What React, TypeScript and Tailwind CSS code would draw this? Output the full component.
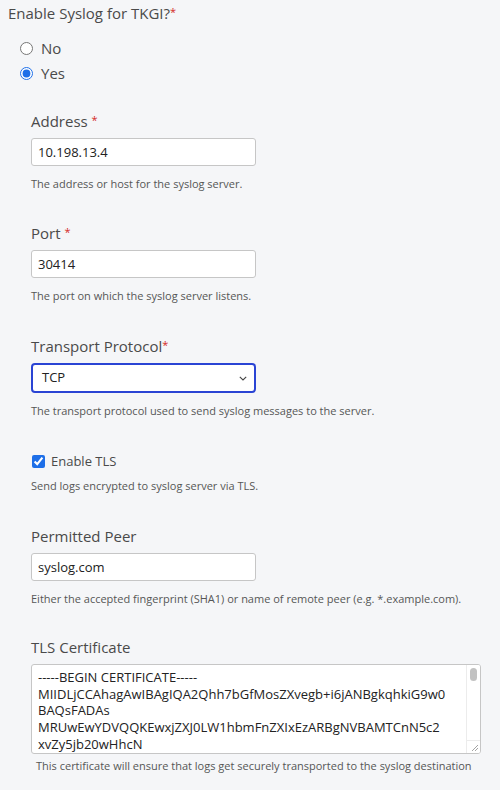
import React from "react";

const font = { fontFamily: "'Open Sans', 'Noto Sans', sans-serif" };

function Req() {
  return <span className="text-[#d42a1e] text-[11px] align-top relative top-[-1px]">*</span>;
}

function Help({ children, className = "" }: { children: React.ReactNode; className?: string }) {
  return <p className={"text-[11px] text-[#565656] leading-[14px] whitespace-nowrap " + className}>{children}</p>;
}

function Label({ children }: { children: React.ReactNode }) {
  return <div className="text-[15px] leading-[18px] text-[#4a4a4a]">{children}</div>;
}

const inputCls =
  "mt-[8px] block w-[225px] h-[28px] bg-white border border-[#c6c6c6] rounded-[3px] px-[6px] text-[13px] text-[#222] outline-none";

const certLines = [
  "-----BEGIN CERTIFICATE-----",
  "MIIDLjCCAhagAwIBAgIQA2Qhh7bGfMosZXvegb+i6jANBgkqhkiG9w0",
  "BAQsFADAs",
  "MRUwEwYDVQQKEwxjZXJ0LW1hbmFnZXIxEzARBgNVBAMTCnN5c2",
  "xvZy5jb20wHhcN",
];

export default function App() {
  return (
    <div className="w-[500px] h-[790px] bg-[#f5f6f8] text-[#313131] overflow-hidden" style={font}>
      <div className="pt-[3px] pl-[8px]">
        <div className="text-[15px] leading-[20px] text-[#4a4a4a]">
          Enable Syslog for TKGI?<Req />
        </div>
        <div className="mt-[16px] ml-[12px] flex flex-col gap-[7px]">
          <label className="flex items-center gap-[8px] text-[15px] leading-[18px] text-[#4a4a4a]">
            <input type="radio" name="s" className="w-[13px] h-[13px] m-0" />
            No
          </label>
          <label className="flex items-center gap-[8px] text-[15px] leading-[18px] text-[#4a4a4a]">
            <input type="radio" name="s" defaultChecked className="w-[13px] h-[13px] m-0 accent-[#1e6fe8]" />
            Yes
          </label>
        </div>
      </div>

      <div className="pl-[31px]">
        <div className="mt-[30px]">
          <Label>
            Address <Req />
          </Label>
          <input defaultValue="10.198.13.4" className={inputCls} />
          <Help className="mt-[11px]">The address or host for the syslog server.</Help>
        </div>

        <div className="mt-[33px]">
          <Label>
            Port <Req />
          </Label>
          <input defaultValue="30414" className={inputCls} />
          <Help className="mt-[11px]">The port on which the syslog server listens.</Help>
        </div>

        <div className="mt-[34px]">
          <Label>
            Transport Protocol<Req />
          </Label>
          <div className="mt-[8px] relative w-[225px] h-[30px] bg-white border-2 border-[#2a44d4] rounded-[4px] flex items-center pl-[9px] text-[13px] text-[#222]">
            TCP
            <svg className="absolute right-[7px] top-[11px]" width="8" height="5" viewBox="0 0 8 5">
              <path d="M0.8 0.8l3.2 3.2L7.2 0.8" fill="none" stroke="#444" strokeWidth="1.1" />
            </svg>
          </div>
          <Help className="mt-[11px]">The transport protocol used to send syslog messages to the server.</Help>
        </div>

        <div className="mt-[34px] pl-[1px]">
          <label className="flex items-center gap-[6px] text-[13px] leading-[18px] text-[#4a4a4a]">
            <input type="checkbox" defaultChecked className="w-[13px] h-[13px] m-0 accent-[#1e6fe8]" />
            Enable TLS
          </label>
          <Help className="mt-[9px] -ml-[1px]">Send logs encrypted to syslog server via TLS.</Help>
        </div>

        <div className="mt-[34px]">
          <Label>Permitted Peer</Label>
          <input defaultValue="syslog.com" className={inputCls} />
          <Help className="mt-[11px]">Either the accepted fingerprint (SHA1) or name of remote peer (e.g. *.example.com).</Help>
        </div>

        <div className="mt-[32px]">
          <Label>TLS Certificate</Label>
          <div className="mt-[8px] relative w-[450px] h-[90px] bg-white border border-[#c6c6c6] rounded-[3px] overflow-hidden">
            <div className="pl-[6px] pt-[4px] text-[13px] leading-[16.7px] text-[#222] whitespace-pre">
              {certLines.map((l, i) => (
                <div key={i}>{l}</div>
              ))}
            </div>
            <div className="absolute right-0 top-0 bottom-0 w-[14px] bg-white border-l border-[#ececec] flex flex-col">
              <div className="mt-[3px] mx-auto w-[7px] h-[13px] rounded-full bg-[#c2c2c2]" />
              <div className="flex-1" />
              <div className="h-[13px] border-t border-[#ececec] relative">
                <svg className="absolute right-[1px] bottom-[1px]" width="8" height="8" viewBox="0 0 8 8">
                  <path d="M7 1L1 7M7 4L4 7" stroke="#9a9a9a" strokeWidth="0.9" />
                </svg>
              </div>
            </div>
          </div>
          <Help className="mt-[5px] pl-[5px]">This certificate will ensure that logs get securely transported to the syslog destination</Help>
        </div>
      </div>
    </div>
  );
}
